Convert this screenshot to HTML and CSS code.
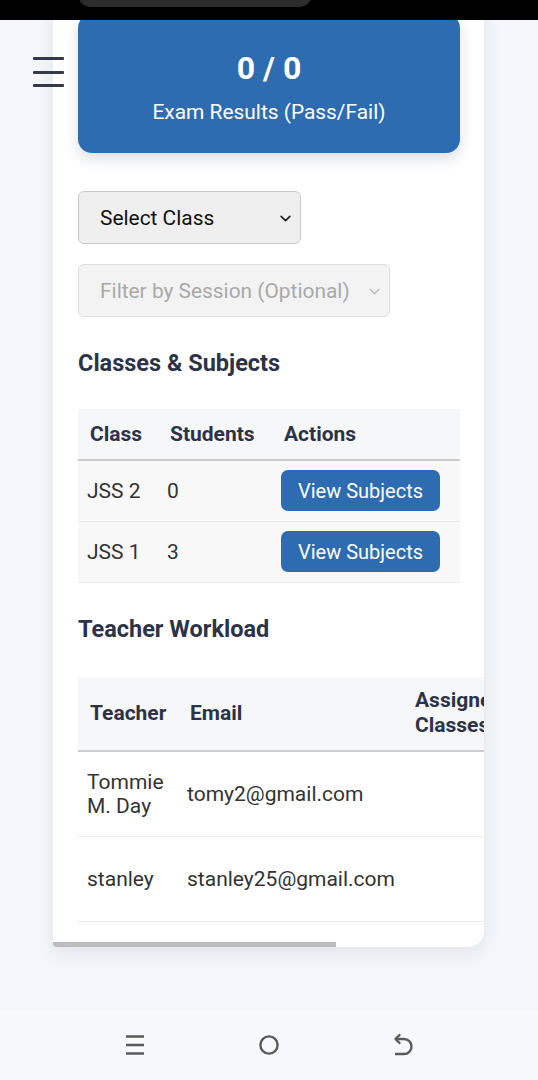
FILE: index.html
```html
<!DOCTYPE html>
<html lang="en">
<head>
<meta charset="utf-8">
<title>Dashboard</title>
<link rel="stylesheet" href="styles.css">
</head>
<body>
<div class="phone">
  <div class="statusbar"><div class="pill"></div></div>
  <div class="viewport">
    <button class="menu-btn" aria-label="Menu"><span></span><span></span><span></span></button>
    <main class="card">
      <div class="card-body">
        <section class="stat">
          <div class="stat-value">0 / 0</div>
          <div class="stat-label">Exam Results (Pass/Fail)</div>
        </section>

        <div class="filters">
          <div class="select-wrap class-select">
            <select class="select"><option>Select Class</option></select>
            <svg class="chev" viewBox="0 0 10 6"><path d="M1 1l4 4 4-4" fill="none" stroke="#222" stroke-width="1.5" stroke-linecap="round" stroke-linejoin="round"/></svg>
          </div>
          <div class="select-wrap session-select">
            <select class="select" disabled><option>Filter by Session (Optional)</option></select>
            <svg class="chev" viewBox="0 0 10 6"><path d="M1 1l4 4 4-4" fill="none" stroke="#bdbdbd" stroke-width="1.3" stroke-linecap="round" stroke-linejoin="round"/></svg>
          </div>
        </div>

        <h2 class="section-title">Classes &amp; Subjects</h2>
        <table class="tbl classes">
          <colgroup><col class="c-class"><col class="c-students"><col class="c-actions"></colgroup>
          <thead>
            <tr><th>Class</th><th>Students</th><th>Actions</th></tr>
          </thead>
          <tbody>
            <tr><td>JSS 2</td><td>0</td><td><button class="btn">View Subjects</button></td></tr>
            <tr><td>JSS 1</td><td>3</td><td><button class="btn">View Subjects</button></td></tr>
          </tbody>
        </table>

        <h2 class="section-title section-title-wide">Teacher Workload</h2>
        <table class="tbl teachers">
          <colgroup><col class="c-teacher"><col class="c-email"><col class="c-assigned"><col class="c-subjects"></colgroup>
          <thead>
            <tr><th>Teacher</th><th>Email</th><th>Assigned Classes</th><th>Assigned Subjects</th></tr>
          </thead>
          <tbody>
            <tr><td>Tommie M. Day</td><td>tomy2@gmail.com</td><td></td><td></td></tr>
            <tr><td>stanley</td><td>stanley25@gmail.com</td><td></td><td></td></tr>
          </tbody>
        </table>
      </div>
      <div class="hscroll"><div class="thumb"></div></div>
    </main>
  </div>
  <nav class="navbar">
    <div class="nav-item">
      <svg width="20" height="22" viewBox="0 0 20 22"><path d="M1 2.5h18M1 11h18M1 19.5h18" stroke="#5a5a5a" stroke-width="2.4" fill="none"/></svg>
    </div>
    <div class="nav-item">
      <svg width="22" height="22" viewBox="0 0 22 22"><circle cx="11" cy="11" r="8.6" stroke="#5a5a5a" stroke-width="2.4" fill="none"/></svg>
    </div>
    <div class="nav-item">
      <svg width="24" height="24" viewBox="0 0 24 24"><path d="M4.5 6H13a7.5 7.5 0 0 1 0 15H4" fill="none" stroke="#5a5a5a" stroke-width="2.4" stroke-linejoin="round"/><path d="M8.5 2L4.5 6l4 4" fill="none" stroke="#5a5a5a" stroke-width="2.4" stroke-linejoin="round" stroke-linecap="round"/></svg>
    </div>
  </nav>
</div>
</body>
</html>
```

FILE: styles.css
```css
* { box-sizing: border-box; }
html, body { margin: 0; padding: 0; }
body {
  width: 538px;
  height: 1080px;
  overflow: hidden;
  background: #f3f6fa;
  font-family: Roboto, "Liberation Sans", sans-serif;
  color: #333;
}
.phone { display: flex; flex-direction: column; height: 1080px; }

.statusbar { height: 20px; flex: none; background: #000; overflow: hidden; }
.pill { width: 234px; height: 26px; margin: -19px 0 0 78px; background: #2d2d2d; border-radius: 13px; }

.viewport { flex: 1; position: relative; overflow: hidden; background: #f3f6fa; }

.menu-btn {
  position: absolute; left: 33px; top: 37px; z-index: 2;
  width: 31px; height: 30px; padding: 0; border: 0; background: none;
  display: flex; flex-direction: column; justify-content: space-between;
}
.menu-btn span { display: block; height: 3px; background: #343a48; border-radius: 1px; }

.card {
  width: 431px;
  margin: -40px 0 0 53px;
  background: #fff;
  border-radius: 16px 16px 16px 4px;
  box-shadow: 0 6px 18px rgba(30, 40, 60, 0.08);
  overflow: hidden;
}
.card-body { padding: 34px 24px 20px 25px; }

.stat {
  background: #2e6cb1;
  border-radius: 14px;
  color: #fff;
  text-align: center;
  padding: 35px 16px 28px;
  box-shadow: 0 6px 14px rgba(20, 40, 80, 0.15);
}
.stat-value { font-size: 32px; font-weight: 700; line-height: 38px; }
.stat-label { font-size: 20.9px; line-height: 26px; margin-top: 12px; }

.filters { display: flex; flex-direction: column; align-items: flex-start; gap: 20px; margin-top: 38px; }
.select-wrap { position: relative; height: 53px; }
.class-select { width: 223px; }
.session-select { width: 312px; }
.select {
  appearance: none; -webkit-appearance: none;
  display: block; width: 100%; height: 53px; margin: 0;
  font-family: inherit; font-size: 20.9px;
  padding: 0 0 0 21px;
  border-radius: 6px; border: 1px solid #c9c9c9;
  background: #efefef; color: #111;
}
.session-select .select { background: #f3f3f3; border-color: #dedede; color: #a9a9a9; opacity: 1; }
.chev { position: absolute; right: 10px; top: 50%; width: 11px; height: 7px; margin-top: -3px; pointer-events: none; }

.section-title { font-size: 23.5px; font-weight: 700; line-height: 28px; color: #2c3347; margin: 32px 0; }
.section-title-wide { margin-bottom: 34px; }

.tbl { border-collapse: separate; border-spacing: 0; table-layout: fixed; font-size: 21px; }
.tbl th {
  text-align: left; font-weight: 700; color: #2c3347;
  background: #f6f7f9; border-bottom: 2px solid #cccccc;
  padding: 12px; line-height: 26px; vertical-align: middle;
}
.tbl td { padding: 9px 9px 10px; border-bottom: 1px solid #ebebeb; line-height: 24px; vertical-align: middle; color: #333; }

.classes { width: 382px; }
.classes .c-class { width: 80px; }
.classes .c-students { width: 114px; }
.classes .c-actions { width: 188px; }
.classes td { background: #f8f8f8; }
.btn {
  display: block; width: 159px; height: 41px;
  background: #2e6cb1; color: #fff; border: 0; border-radius: 7px;
  font-family: inherit; font-size: 20px; padding: 0;
}

.teachers { width: 600px; }
.teachers .c-teacher { width: 100px; }
.teachers .c-email { width: 225px; }
.teachers .c-assigned { width: 130px; }
.teachers .c-subjects { width: 145px; }
.teachers th { padding: 11px 12px 12px; line-height: 25px; }
.teachers td { height: 85px; padding: 18px 9px; background: #fff; }

.hscroll { height: 5px; }
.thumb { width: 283px; height: 5px; background: #bdbdbd; }

.navbar { height: 70px; flex: none; background: #f6f8fb; display: flex; justify-content: center; align-items: center; }
.nav-item { width: 134px; display: flex; justify-content: center; align-items: center; }
.nav-item svg { display: block; }
```
